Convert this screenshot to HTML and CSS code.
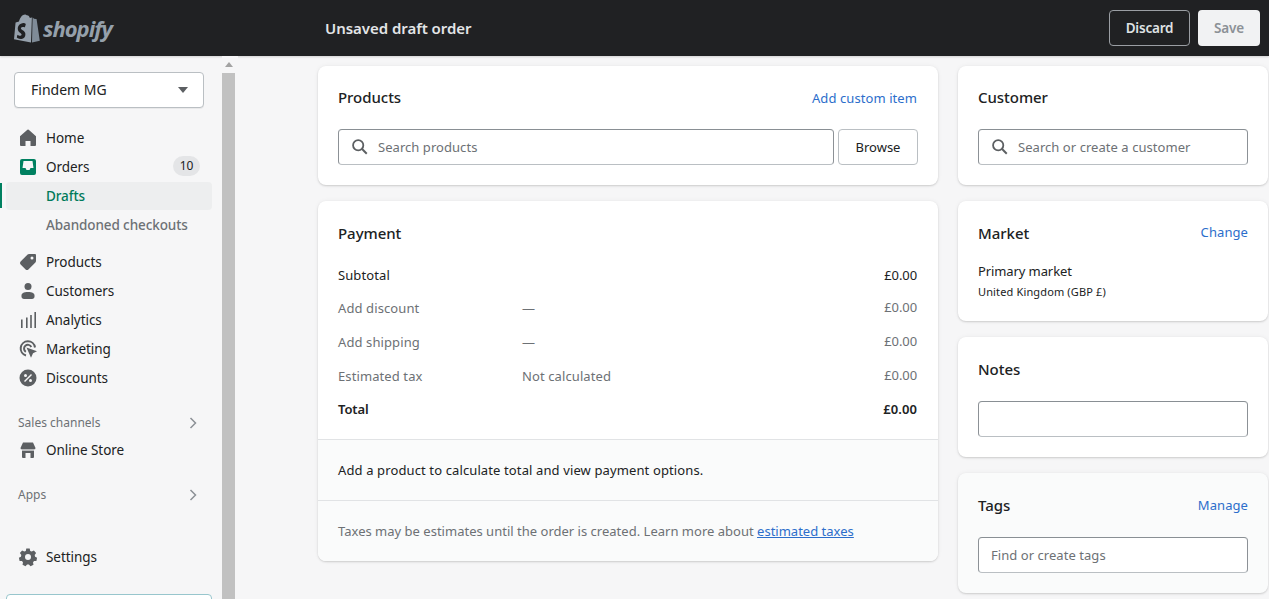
FILE: index.html
```html
<!DOCTYPE html>
<html lang="en">
<head>
<meta charset="utf-8">
<title>Unsaved draft order</title>
<link rel="stylesheet" href="styles.css">
</head>
<body>
<header class="topbar">
  <div class="brand">
    <svg class="bag" viewBox="0 0 26 29" width="26" height="29"><path d="M17.6 3.6 15.9 4.1C15.4 2.6 14.5 1.3 13 1.3h-.3C12.2.7 11.7.4 11.2.4 7.4.4 5.6 5.1 5 7.5L2.400 8.300C1.600 8.600 1.600 8.600 1.500 9.300L0 25.300 17 28.500 17.900 3.600Z" fill="#95a0ab"/><path d="M18.600 3.500 18 28.500 25.800 26.700 22.600 5.300C22.500 5 22.300 4.900 22.100 4.900L20 4.700 18.800 3.500Z" fill="#7f8b97"/><path d="M11.800 10.300 10.900 13.300C10.900 13.300 9.900 12.800 8.700 12.900 6.900 13 6.900 14.100 6.900 14.400 7 16 11.200 16.300 11.400 20 11.600 22.900 9.900 24.900 7.400 25 4.400 25.200 2.800 23.400 2.800 23.400L3.400 20.700C3.400 20.700 5.100 21.900 6.400 21.800 7.300 21.800 7.600 21 7.600 20.600 7.500 18.500 4.100 18.600 3.800 15.200 3.600 12.300 5.500 9.400 9.700 9.100 11 9 11.800 10.300 11.800 10.300Z" fill="#202123"/></svg>
    <span class="wordmark">shopify</span>
  </div>
  <h1 class="page-title">Unsaved draft order</h1>
  <div class="actions">
    <button class="btn-discard">Discard</button>
    <button class="btn-save">Save</button>
  </div>
</header>
<div class="shell">
  <nav class="sidebar">
    <button class="store"><span>Findem MG</span><svg viewBox="0 0 10 6" width="10" height="6"><path d="M0 0h10L5 6z" fill="#5c5f62"/></svg></button>
    <ul class="nav nav-first">
      <li class="item"><svg class="ico" viewBox="0 0 20 20"><path d="M18 8.300 10.700 1.800a1 1 0 0 0-1.300 0L2 8.300V17a1 1 0 0 0 1 1h4.500v-5h5v5H17a1 1 0 0 0 1-1z" fill="#5c5f62"/></svg>Home</li>
      <li class="item"><svg class="ico" viewBox="0 0 20 20"><path fill-rule="evenodd" d="M4 2h12a2 2 0 0 1 2 2v12a2 2 0 0 1-2 2H4a2 2 0 0 1-2-2V4a2 2 0 0 1 2-2zm1.500 2L4.500 11h3l1 2h3l1-2h3l-1-7z" fill="#008060"/></svg>Orders<span class="count">10</span></li>
      <li class="sub active">Drafts</li>
      <li class="sub">Abandoned checkouts</li>
    </ul>
    <ul class="nav nav-second">
      <li class="item"><svg class="ico" viewBox="0 0 20 20"><path fill-rule="evenodd" d="M11 2h6a1 1 0 0 1 1 1v6a2 2 0 0 1-.6 1.400l-7 7a2 2 0 0 1-2.800 0l-5-5a2 2 0 0 1 0-2.800l7-7A2 2 0 0 1 11 2zm3 5.500a1.500 1.500 0 1 0 0-3 1.500 1.500 0 0 0 0 3z" fill="#5c5f62"/></svg>Products</li>
      <li class="item"><svg class="ico" viewBox="0 0 20 20"><circle cx="10" cy="5.500" r="3.500" fill="#5c5f62"/><path d="M3.500 14.500c0-2 2-3.500 6.500-3.500s6.500 1.500 6.500 3.500v1c0 1.500-1 2.500-2.500 2.500H6c-1.500 0-2.500-1-2.500-2.500z" fill="#5c5f62"/></svg>Customers</li>
      <li class="item"><svg class="ico" viewBox="0 0 20 20"><path d="M3 9.500h1.600V18H3zM8 7.500h1.600V18H8zM12.200 5h1.600v13h-1.600zM16.400 2h1.600v16h-1.600z" fill="#5c5f62"/></svg>Analytics</li>
      <li class="item"><svg class="ico" viewBox="0 0 20 20"><path d="M8 16.500A7.200 7.200 0 1 1 17 8.500" fill="none" stroke="#5c5f62" stroke-width="2"/><path d="M7.800 12.800A3.800 3.800 0 1 1 13.300 8" fill="none" stroke="#5c5f62" stroke-width="2"/><path d="M8.500 8.500 19 12.200 15 14.300 13 18.800z" fill="#5c5f62"/></svg>Marketing</li>
      <li class="item"><svg class="ico" viewBox="0 0 20 20"><path fill-rule="evenodd" d="M10 1.500a8.500 8.500 0 1 1 0 17 8.500 8.500 0 0 1 0-17zM13 6l-7 7 1 1 7-7zM7.500 6A1.500 1.500 0 1 0 7.500 9 1.500 1.500 0 0 0 7.500 6zm5 5a1.500 1.500 0 1 0 0 3 1.500 1.500 0 0 0 0-3z" fill="#5c5f62"/></svg>Discounts</li>
    </ul>
    <div class="section section-sales"><span>Sales channels</span><svg class="chev" viewBox="0 0 8 12" width="8" height="12"><path d="M1.500 1 6.500 6l-5 5" fill="none" stroke="#8c9196" stroke-width="1.500"/></svg></div>
    <ul class="nav">
      <li class="item"><svg class="ico" viewBox="0 0 20 20"><path fill-rule="evenodd" d="M5 2.500h10l2.500 5.500a2.200 2.200 0 0 1-1.500 2v7a1 1 0 0 1-1 1h-2.500v-5h-5v5H5a1 1 0 0 1-1-1v-7a2.200 2.200 0 0 1-1.500-2z" fill="#5c5f62"/><path d="M3 10h14" stroke="#f6f6f7" stroke-width="1.200"/></svg>Online Store</li>
    </ul>
    <div class="section section-apps"><span>Apps</span><svg class="chev" viewBox="0 0 8 12" width="8" height="12"><path d="M1.500 1 6.500 6l-5 5" fill="none" stroke="#8c9196" stroke-width="1.500"/></svg></div>
    <ul class="nav nav-settings">
      <li class="item"><svg class="ico" viewBox="0 0 20 20"><path fill-rule="evenodd" d="M8.300 1.500h3.400l.5 2.400 1.500.7 2.200-1.200 2.200 2.600-1.400 2 .4 1.700 2 1-.7 3.300-2.400.1-1 1.300.5 2.400-3 1.500-1.600-1.800h-1.800l-1.600 1.800-3-1.500.5-2.400-1-1.300-2.400-.1-.7-3.300 2-1 .4-1.700-1.400-2L4.100 3.400l2.200 1.200 1.500-.7zM10 7a3 3 0 1 0 0 6 3 3 0 0 0 0-6z" fill="#5c5f62"/></svg>Settings</li>
    </ul>
    <div class="promo"></div>
  </nav>
  <div class="scrollbar"><span class="arrow"></span><span class="thumb"></span></div>
  <main class="content">
    <div class="col-main">
      <section class="card first">
        <div class="card-head"><h2>Products</h2><a class="link">Add custom item</a></div>
        <div class="search-row">
          <div class="field grow"><svg class="search" viewBox="0 0 20 20"><circle cx="8" cy="8" r="5.700" fill="none" stroke="#5c5f62" stroke-width="2"/><path d="m12.300 12.300 5.200 5.200" stroke="#5c5f62" stroke-width="2.200"/></svg><span class="ph">Search products</span></div>
          <button class="browse">Browse</button>
        </div>
      </section>
      <section class="card payment">
        <div class="pay-top">
          <h2>Payment</h2>
          <div class="row r-subtotal"><span class="c1">Subtotal</span><span class="c2"></span><span class="c3">£0.00</span></div>
          <div class="row"><span class="c1 muted">Add discount</span><span class="c2 muted">—</span><span class="c3 muted">£0.00</span></div>
          <div class="row"><span class="c1 muted">Add shipping</span><span class="c2 muted">—</span><span class="c3 muted">£0.00</span></div>
          <div class="row"><span class="c1 muted">Estimated tax</span><span class="c2 muted">Not calculated</span><span class="c3 muted">£0.00</span></div>
          <div class="row r-total"><span class="c1">Total</span><span class="c2"></span><span class="c3">£0.00</span></div>
        </div>
        <div class="pay-note">Add a product to calculate total and view payment options.</div>
        <div class="pay-note taxes">Taxes may be estimates until the order is created. Learn more about <a class="link under">estimated taxes</a></div>
      </section>
    </div>
    <aside class="col-side">
      <section class="card first">
        <div class="card-head"><h2>Customer</h2></div>
        <div class="field"><svg class="search" viewBox="0 0 20 20"><circle cx="8" cy="8" r="5.700" fill="none" stroke="#5c5f62" stroke-width="2"/><path d="m12.300 12.300 5.200 5.200" stroke="#5c5f62" stroke-width="2.200"/></svg><span class="ph">Search or create a customer</span></div>
      </section>
      <section class="card market">
        <div class="card-head"><h2>Market</h2><a class="link link-up">Change</a></div>
        <p class="m1">Primary market</p>
        <p class="m2">United Kingdom (GBP £)</p>
      </section>
      <section class="card">
        <div class="card-head"><h2>Notes</h2></div>
        <div class="field"></div>
      </section>
      <section class="card tint">
        <div class="card-head"><h2>Tags</h2><a class="link">Manage</a></div>
        <div class="field plain"><span class="ph">Find or create tags</span></div>
      </section>
    </aside>
  </main>
</div>
</body>
</html>
```
FILE: styles.css
```css
* { box-sizing: border-box; }
html, body { margin: 0; height: 100%; overflow: hidden; }
body {
  font-family: "Noto Sans", "Open Sans", sans-serif;
  font-size: 13.5px;
  line-height: 20px;
  color: #202223;
  background: #f6f6f7;
}
ul { list-style: none; margin: 0; padding: 0; }
h1, h2, p { margin: 0; }
button { font: inherit; cursor: pointer; }

.topbar {
  height: 56px;
  background: #202123;
  display: flex;
  align-items: center;
  padding-right: 9px;
  box-shadow: 0 1px 2px rgba(0,0,0,.15);
  position: relative;
}
.brand { width: 325px; display: flex; align-items: center; padding-left: 14px; gap: 3px; }
.bag { display: block; }
.wordmark {
  font-family: "Open Sans", sans-serif;
  font-style: italic;
  font-weight: 700;
  font-size: 22px;
  letter-spacing: -1px;
  color: #95a0ab;
  line-height: 28px;
  margin-top: -1px;
}
.page-title { font-size: 15px; font-weight: 600; color: #e3e5e7; flex: 1; letter-spacing: -.04px; }
.actions { display: flex; gap: 8px; }
.btn-discard, .btn-save {
  height: 36px;
  border-radius: 4px;
  font-weight: 600;
  font-size: 13.5px;
  letter-spacing: -.2px;
}
.btn-discard { width: 81px; background: transparent; border: 1px solid #9a9ea3; color: #dfe1e3; }
.btn-save { width: 62px; background: #f1f2f3; border: 0; color: #8c9196; }

.shell { display: flex; height: 543px; }
.sidebar {
  width: 222px;
  flex: none;
  padding: 16px 0 0;
  background: #f6f6f7;
  overflow: hidden;
}
.store {
  margin-left: 14px;
  width: 190px;
  height: 36px;
  background: #fff;
  border: 1px solid #babfc3;
  border-radius: 4px;
  display: flex;
  align-items: center;
  justify-content: space-between;
  padding: 0 15px 0 16px;
  color: #202223;
  font-size: 14px;
  box-shadow: 0 1px 0 rgba(0,0,0,.05);
}
.nav-first { margin-top: 15px; }
.nav-second { margin-top: 8px; }
.item {
  height: 29px;
  display: flex;
  align-items: center;
  padding-left: 18px;
  position: relative;
  font-size: 13.5px;
  letter-spacing: -.05px;
}
.ico { width: 20px; height: 20px; margin-right: 8px; flex: none; }
.count {
  position: absolute;
  left: 173px;
  top: 4px;
  width: 27px;
  height: 20px;
  background: #e4e5e7;
  border-radius: 10px;
  text-align: center;
  font-size: 12px;
}
.sub {
  height: 29px;
  padding-left: 46px;
  display: flex;
  align-items: center;
  font-weight: 500;
  color: #6d7175;
  font-size: 13.5px;
  letter-spacing: -.1px;
  position: relative;
}
.sub.active {
  color: #007a5a;
  background: #edeeef;
  margin: 1px 10px 0 6px;
  padding-left: 40px;
  border-radius: 4px;
  height: 28px;
}
.sub.active::before {
  content: "";
  position: absolute;
  left: -6px;
  top: 1px;
  width: 2px;
  height: 25px;
  background: #008060;
}
.section {
  display: flex;
  align-items: center;
  justify-content: space-between;
  padding: 0 25px 0 18px;
  height: 20px;
  font-size: 12px;
  color: #6d7175;
}
.section-sales { margin-top: 21px; margin-bottom: 2px; }
.section-apps { margin-top: 21px; }
.nav-settings { margin-top: 37px; }
.promo {
  margin: 23px 0 0 6px;
  width: 206px;
  height: 30px;
  border: 1px solid #98c6cd;
  border-radius: 4px;
  background: #fff;
}
.scrollbar { width: 16px; flex: none; background: #f6f6f7; position: relative; }
.arrow {
  position: absolute; left: 3px; top: 6px;
  border: 4px solid transparent; border-top: 0; border-bottom: 5px solid #a3a3a3;
}
.thumb { position: absolute; left: 0; width: 13px; top: 17px; bottom: 0; background: #c1c1c1; }

.content {
  flex: 1;
  display: flex;
  gap: 20px;
  padding: 10px 1px 0 80px;
  overflow: hidden;
  border-left: 1px solid #e1e3e5;
  margin-left: -1px;
}
.col-main { width: 620px; flex: none; display: flex; flex-direction: column; gap: 16px; }
.col-side { flex: 1; display: flex; flex-direction: column; gap: 16px; }
.card {
  background: #fff;
  border-radius: 8px;
  box-shadow: 0 0 5px rgba(23,24,24,.05), 0 1px 2px rgba(0,0,0,.15);
  padding: 20px;
  height: 120px;
  flex: none;
}
.card.first { height: 119px; }
.card.tint { background: #fafbfb; }
.card-head {
  display: flex;
  justify-content: space-between;
  align-items: center;
  height: 24px;
  margin-bottom: 20px;
}
.first .card-head { height: 22px; margin-bottom: 21px; }
.first .link { margin: 2px 1px 0 0; }
h2 { font-size: 15px; font-weight: 500; letter-spacing: -.05px; }
.link { color: #2c6ecb; font-size: 13px; letter-spacing: .08px; }
.link-up { margin-top: -2px; }
.under { text-decoration: underline; }
.search-row { display: flex; gap: 4px; }
.grow { flex: 1; }
.field {
  height: 36px;
  background: #fff;
  border: 1px solid #8c9196;
  border-top-color: #898f94;
  border-bottom-color: #babfc3;
  border-radius: 4px;
  display: flex;
  align-items: center;
  padding-left: 12px;
}
.field.plain { padding-left: 12px; }
.search { width: 18px; height: 18px; margin-right: 9px; flex: none; }
.ph { color: #6d7175; font-size: 13px; letter-spacing: .05px; }
.browse {
  width: 80px;
  height: 36px;
  background: #fff;
  border: 1px solid #babfc3;
  border-radius: 4px;
  color: #202223;
  font-weight: 400;
  font-size: 13px;
}
.payment { height: 360px; padding: 0; display: flex; flex-direction: column; }
.pay-top { padding: 20px 21px 0 20px; height: 238px; }
.pay-top h2 { line-height: 24px; }
.row { display: flex; height: 34px; align-items: center; font-size: 13px; letter-spacing: .1px; }
.r-subtotal { margin-top: 14px; height: 32px; }
.r-total { height: 32px; font-weight: 600; letter-spacing: -.1px; }
.c1 { width: 184px; }
.c2 { flex: 1; }
.c3 { width: 100px; text-align: right; letter-spacing: -.1px; }
.c3.muted { margin-top: -2px; }
.r-total .c3 { letter-spacing: .1px; }
.muted { color: #6d7175; }
.pay-note {
  height: 61px;
  background: #fafbfb;
  border-top: 1px solid #e1e3e5;
  padding: 0 20px;
  display: flex;
  align-items: center;
  font-size: 13px;
  letter-spacing: .12px;
  white-space: pre-wrap;
}
.taxes { color: #6d7175; display: block; line-height: 60px; flex: 1; border-radius: 0 0 8px 8px; letter-spacing: .01px; }
.taxes .link { letter-spacing: .01px; }
.m1 { font-size: 13px; margin-top: -4px; line-height: 21px; letter-spacing: -.1px; }
.m2 { font-size: 11px; line-height: 20px; letter-spacing: .14px; }
```
